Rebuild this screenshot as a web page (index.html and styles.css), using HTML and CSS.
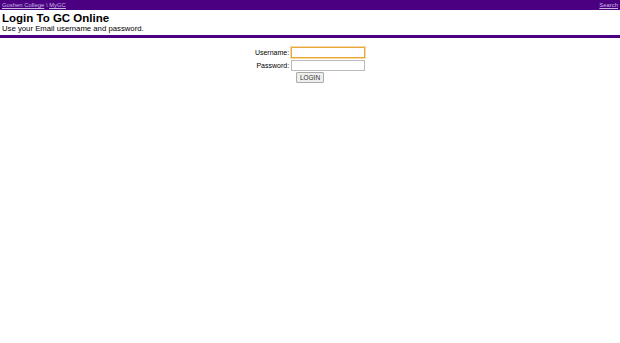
FILE: index.html
```html
<!DOCTYPE html>
<html lang="en">
<head>
  <meta charset="UTF-8">
  <title>Login To GC Online</title>
  <link rel="stylesheet" href="styles.css">
</head>
<body>
  <!-- Barra superior -->
  <div class="topbar">
    <div class="crumbs"><a href="#">Goshen College</a> \ <a href="#">MyGC</a></div>
    <a href="#">Search</a>
  </div>

  <div class="header">
    <h1>Login To GC Online</h1>
    <p>Use your Email username and password.</p>
  </div>

  <!-- Formulario -->
  <form class="login">
    <div class="grid">
      <label for="user">Username:</label>
      <input type="text" id="user" class="focused">
      <label for="pass">Password:</label>
      <input type="password" id="pass">
    </div>
    <button type="submit">LOGIN</button>
  </form>
</body>
</html>
```

FILE: styles.css
```css
body {
  font-family: "Liberation Sans", Arial, sans-serif;
  margin: 0;
  padding: 0;
  background: #fff;
  color: #000;
}

.topbar {
  background: #4b0082;
  height: 10px;
  display: flex;
  justify-content: space-between;
  align-items: center;
  padding: 0 2px;
  font-size: 5.9px;
  color: #c8b8e0;
}

.topbar a {
  color: #c8b8e0;
}

.header {
  padding: 2px 2px 2px;
  border-bottom: 3px solid #4b0082;
}

.header h1 {
  font-size: 11.5px;
  margin: 0;
  line-height: 12px;
}

.header p {
  font-size: 7.75px;
  margin: 0;
  line-height: 9px;
}

.login {
  display: flex;
  flex-direction: column;
  align-items: center;
  margin-top: 9px;
  font-size: 7px;
}

.grid {
  display: grid;
  grid-template-columns: auto auto;
  column-gap: 2px;
  row-gap: 2px;
  align-items: center;
}

.grid label {
  text-align: right;
}

.grid input {
  width: 70px;
  height: 7px;
  padding: 1px;
  border: 1px solid #bbb;
  font-size: 7px;
}

.grid input.focused {
  border-color: #e8a83c;
  outline: 1px solid #f5d9a0;
}

.login button {
  font-family: "Liberation Sans", Arial, sans-serif;
  font-size: 6.5px;
  color: #333;
  padding: 1px 3px;
  height: 11px;
  margin-top: 1px;
  background: #eee;
  border: 1px solid #aaa;
  border-radius: 1px;
}
```
